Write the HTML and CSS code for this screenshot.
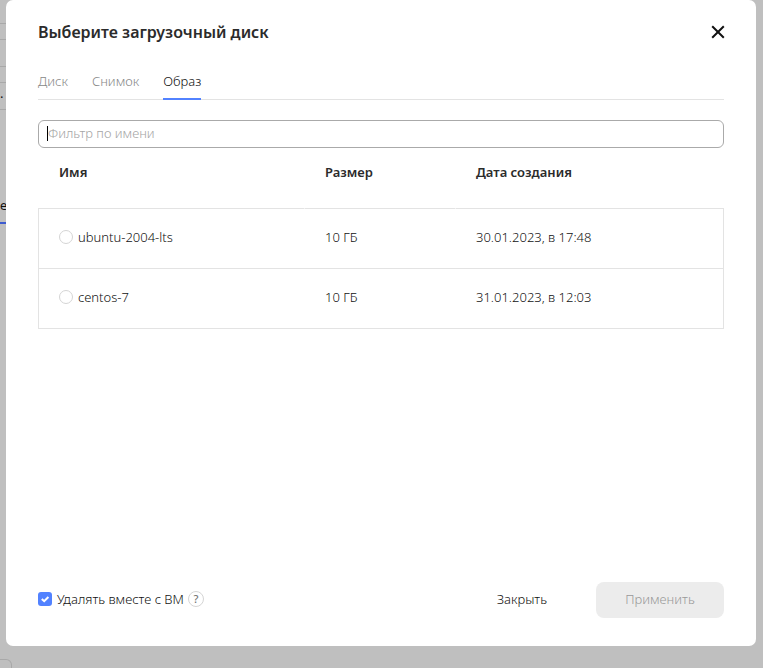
FILE: index.html
```html
<!DOCTYPE html>
<html lang="ru">
<head>
<meta charset="utf-8">
<title>Выберите загрузочный диск</title>
<link rel="stylesheet" href="styles.css">
</head>
<body>
<div class="stage">
  <div class="backdrop" aria-hidden="true">
    <div class="backdrop-fields">
      <div class="backdrop-field"></div>
      <div class="backdrop-field"></div>
      <div class="backdrop-field">.</div>
    </div>
    <div class="backdrop-tab">е.</div>
    <div class="backdrop-button"></div>
  </div>
  <section class="dialog" role="dialog" aria-labelledby="dialog-title">
    <header class="dialog-header">
      <h1 class="dialog-title" id="dialog-title">Выберите загрузочный диск</h1>
      <button class="close" type="button" aria-label="Закрыть окно">
        <svg width="14" height="14" viewBox="0 0 14 14" fill="none" stroke="currentColor" stroke-width="2"><path d="M1.2 1.2 12.8 12.8M12.8 1.2 1.2 12.8"/></svg>
      </button>
    </header>
    <nav class="tabs">
      <a class="tab" href="#disk">Диск</a>
      <a class="tab" href="#snapshot">Снимок</a>
      <a class="tab tab-active" href="#image" aria-current="page">Образ</a>
    </nav>
    <div class="filter">
      <input class="filter-input" type="text" placeholder="Фильтр по имени" aria-label="Фильтр по имени">
    </div>
    <table class="images">
      <colgroup><col class="col-name"><col class="col-size"><col></colgroup>
      <thead>
        <tr><th>Имя</th><th>Размер</th><th>Дата создания</th></tr>
      </thead>
      <tbody>
        <tr>
          <td><label class="choice"><input class="radio" type="radio" name="image">ubuntu-2004-lts</label></td>
          <td>10 ГБ</td>
          <td>30.01.2023, в 17:48</td>
        </tr>
        <tr>
          <td><label class="choice"><input class="radio" type="radio" name="image">centos-7</label></td>
          <td>10 ГБ</td>
          <td>31.01.2023, в 12:03</td>
        </tr>
      </tbody>
    </table>
    <footer class="dialog-footer">
      <label class="choice">
        <span class="check">
          <input class="checkbox" type="checkbox" checked>
          <svg class="check-mark" viewBox="0 0 14 14" fill="none" stroke="currentColor" stroke-width="2"><path d="M3.8 7 6.2 9.2 10.4 5"/></svg>
        </span>
        Удалять вместе с ВМ
      </label>
      <button class="help" type="button">?</button>
      <button class="button button-flat" type="button">Закрыть</button>
      <button class="button button-apply" type="button" disabled>Применить</button>
    </footer>
  </section>
</div>
</body>
</html>
```

FILE: styles.css
```css
* {
  box-sizing: border-box;
}

body {
  margin: 0;
  background: #bfbfbf;
  color: #111;
  font: 300 13px/20px "Noto Sans", "Open Sans", sans-serif;
}

button,
input {
  font: inherit;
  color: inherit;
}

.stage {
  display: grid;
  height: 100vh;
  overflow: hidden;
}

.backdrop,
.dialog {
  grid-area: 1 / 1;
}

/* Page behind the dialog */
.backdrop {
  display: flex;
  flex-direction: column;
  align-items: flex-start;
  font-weight: 400;
}

.backdrop-fields {
  display: grid;
  gap: 15px;
  width: 50%;
  margin-top: -4px;
}

.backdrop-field {
  height: 28px;
  border: 1px solid #a8a8a8;
  border-width: 1px 0;
  line-height: 20px;
}

.backdrop-tab {
  margin-top: 85px;
  padding-bottom: 7px;
  border-bottom: 2px solid #3d5bcf;
}

.backdrop-button {
  width: 12px;
  height: 28px;
  margin: auto 0 -19px;
  border: 1px solid #a8a8a8;
  border-left: 0;
  border-radius: 0 6px 0 0;
}

/* Dialog */
.dialog {
  position: relative;
  display: flex;
  flex-direction: column;
  margin: 0 7px 22px 6px;
  padding: 20px 32px 28px;
  border-radius: 7px;
  background: #fff;
}

.dialog-header {
  display: flex;
  align-items: center;
  justify-content: space-between;
}

.dialog-title {
  margin: 0;
  color: #2b2b2b;
  font-size: 16px;
  font-weight: 600;
  line-height: 24px;
}

.close {
  display: flex;
  margin-right: -1px;
  padding: 0;
  border: 0;
  background: none;
}

.tabs {
  display: flex;
  gap: 24px;
  margin-top: 27px;
  border-bottom: 1px solid #e3e3e3;
}

.tab {
  margin-bottom: -1px;
  padding-bottom: 7px;
  border-bottom: 2px solid transparent;
  color: #888;
  text-decoration: none;
}

.tab-active {
  border-color: #5282ff;
  color: #111;
}

.filter {
  position: relative;
  margin-top: 20px;
}

/* Text cursor */
.filter::before {
  content: "";
  position: absolute;
  top: 6px;
  left: 9px;
  width: 1px;
  height: 15px;
  background: #000;
}

.filter-input {
  display: block;
  width: 100%;
  height: 28px;
  padding: 0 9px 2px;
  border: 1px solid #aaa;
  border-radius: 6px;
  background: none;
  outline: 0;
}

.filter-input::placeholder {
  color: #a5a5a5;
  opacity: 1;
}

.images {
  width: 100%;
  border-spacing: 0;
  table-layout: fixed;
}

.col-name {
  width: 267px;
}

.col-size {
  width: 151px;
}

.images th,
.images td {
  padding: 0 20px;
  border-bottom: 1px solid #e3e3e3;
  text-align: left;
}

.images th {
  height: 61px;
  padding-top: 14px;
  border-right: 1px solid #fff;
  color: #2b2b2b;
  font-weight: 600;
  vertical-align: top;
}

.images th:last-child {
  border-right: 0;
}

.images td {
  height: 60px;
  padding-bottom: 3px;
}

.images th:first-child {
  padding-left: 21px;
}

.images td:first-child {
  border-left: 1px solid #e3e3e3;
}

.images td:last-child {
  border-right: 1px solid #e3e3e3;
}

.choice {
  display: flex;
  align-items: center;
  gap: 5px;
}

.radio,
.checkbox {
  appearance: none;
  width: 14px;
  height: 14px;
  margin: 0;
  border: 1px solid #d5d5d5;
  border-radius: 50%;
}

.check {
  position: relative;
  display: flex;
}

.checkbox {
  border: 0;
  border-radius: 3px;
  background: #5282ff;
}

.check-mark {
  position: absolute;
  inset: 0;
  color: #fff;
}

.dialog-footer {
  display: flex;
  align-items: center;
  margin-top: auto;
}

.dialog-footer .choice,
.help {
  margin-bottom: 2px;
}

.help {
  width: 16px;
  height: 16px;
  margin-left: 4px;
  padding: 0;
  border: 1px solid #d5d5d5;
  border-radius: 50%;
  background: none;
  color: #777;
  font-size: 11px;
  font-weight: 500;
  line-height: 14px;
}

.button {
  height: 36px;
  padding: 0 20px 2px;
  border: 0;
  border-radius: 8px;
}

.button-flat {
  margin-left: auto;
  background: none;
}

.button-apply {
  width: 128px;
  margin-left: 29px;
  background: #ececec;
  color: #999;
}
```
